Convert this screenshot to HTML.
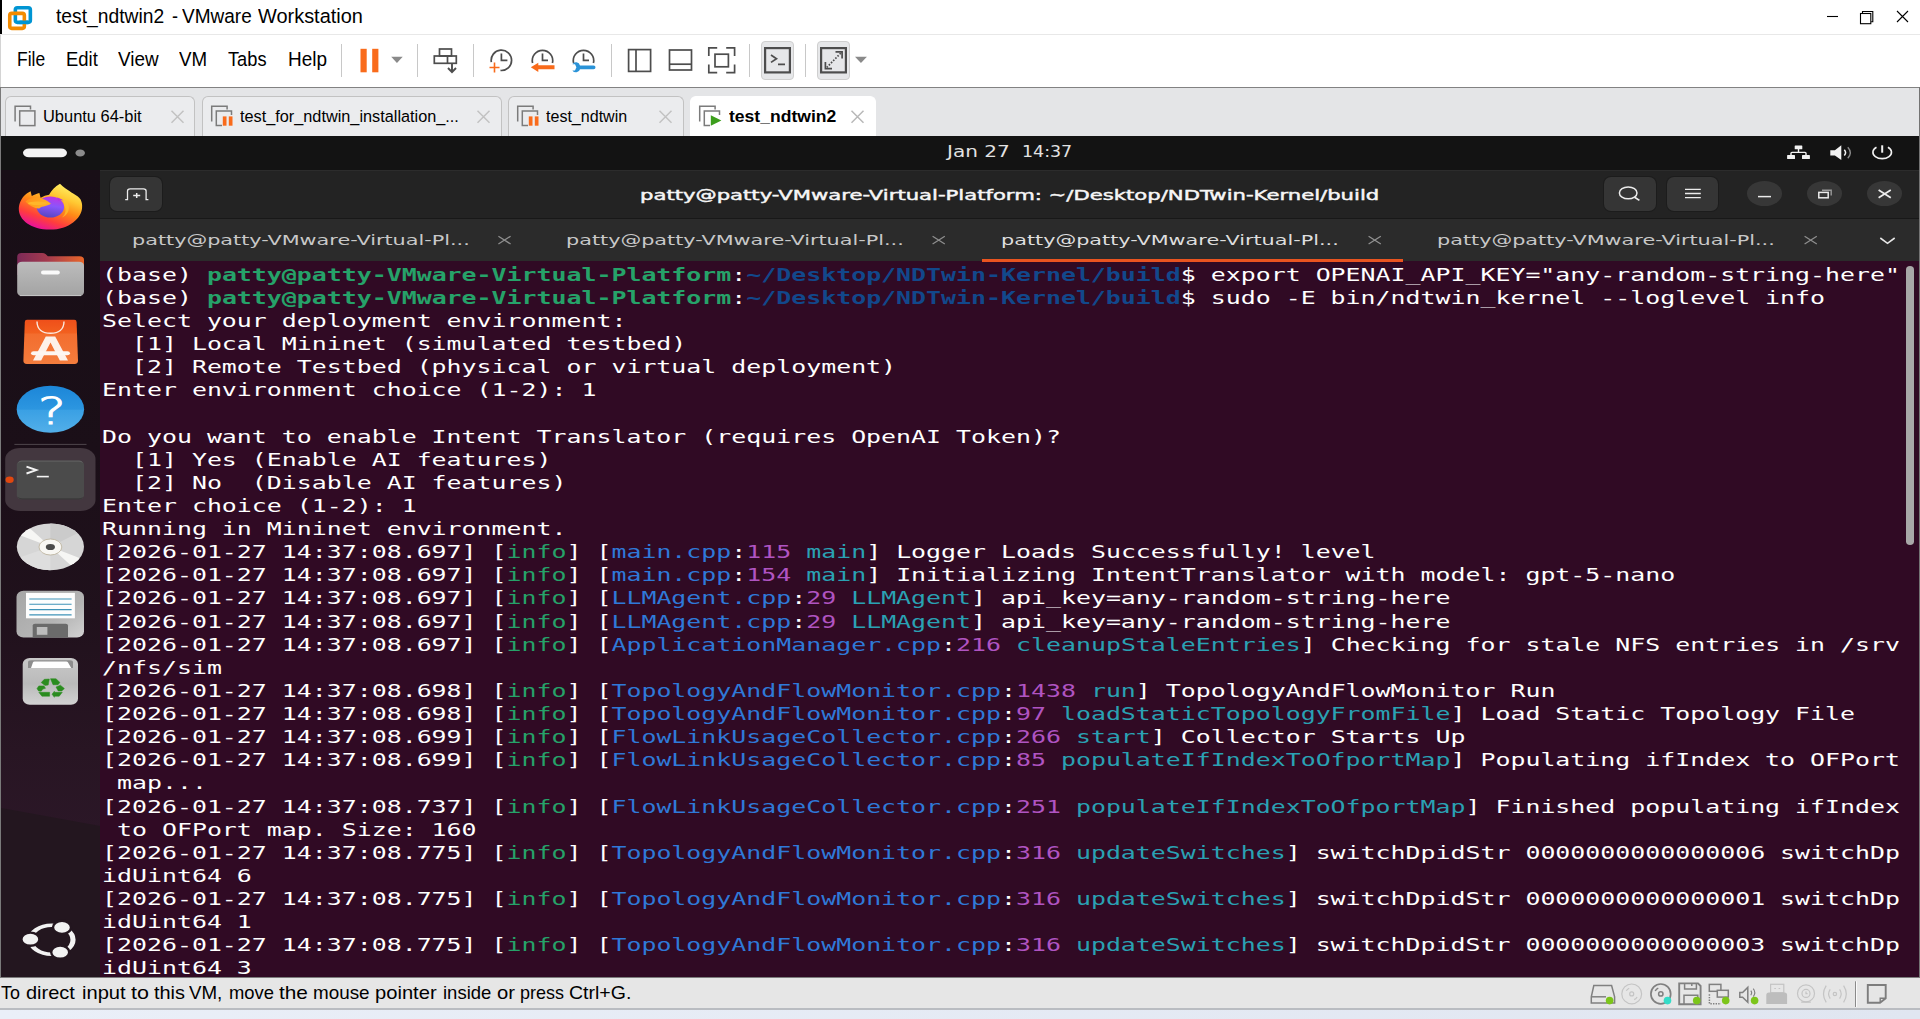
<!DOCTYPE html>
<html lang="en"><head><meta charset="utf-8"><title>test_ndtwin2 - VMware Workstation</title>
<style>
html,body{margin:0;padding:0;width:1920px;height:1019px;overflow:hidden;background:#fff;}
body{position:relative;font-family:"Liberation Sans",sans-serif;}
.t{position:absolute;white-space:pre;transform-origin:0 0;display:block;}
.abs{position:absolute;}
svg{position:absolute;overflow:visible;}
#titlebar{left:0;top:0;width:1920px;height:34px;background:#fff;}
#menubar{left:0;top:35px;width:1920px;height:52px;background:#fff;}
#tabstrip{left:0;top:87px;width:1920px;height:49px;background:#e4e5e7;border-top:1px solid #828282;box-sizing:border-box;}
.vtab{position:absolute;top:96px;height:41px;box-sizing:border-box;border:1px solid #c2c2c2;border-bottom:none;border-radius:6px 6px 0 0;background:#ebecee;}
.vtab.on{background:#fff;border-color:#fff;}
#guest{left:1px;top:136px;width:1918px;height:841px;background:#300a24;overflow:hidden;}
#topbar{left:0;top:0;width:1918px;height:34px;background:#131313;}
#dock{left:0;top:34px;width:99px;height:807px;background:linear-gradient(180deg,#180e16 0%,#1b0f18 35%,#20111c 55%,#281523 72%,#2b1727 82%,#2b1727 100%);}
#thead{left:99px;top:34px;width:1819px;height:48px;background:#232323;border-top:1px solid #2c2c2c;box-sizing:border-box;}
#ttabs{left:99px;top:82px;width:1819px;height:43px;background:#2b2b2b;border-top:1px solid #181818;box-sizing:border-box;}
#tbody{left:99px;top:125px;width:1819px;height:716px;background:#300a24;}
.row{position:absolute;left:1.6px;height:23.125px;white-space:pre;font:400 17.6px/23.125px "DejaVu Sans Mono","Liberation Mono",monospace;color:#fff;transform-origin:0 0;transform:scaleX(1.41448);}
.row b{font-weight:700}
.g{color:#26a269}.bl{color:#12488b}.i{color:#26a269}.f{color:#2f79d8}.n{color:#b054c2}.c{color:#2aa1b3}
#statusbar{left:0;top:977px;width:1920px;height:31px;background:#e6e6e6;border-top:1px solid #7c7c7c;box-sizing:border-box;}
#bottom{left:0;top:1008px;width:1920px;height:11px;background:linear-gradient(90deg,#eaeff8,#e0e6f1);border-top:2px solid #b9bcc1;box-sizing:border-box;}
.btn{position:absolute;background:#353535;border-radius:7px;box-shadow:0 0 0 1px rgba(0,0,0,.2);}
.wb{position:absolute;background:#373737;border-radius:50%;}
.sep{position:absolute;top:44px;width:1px;height:33px;background:#c8c8c8;}
.tbtn{position:absolute;top:41px;height:39px;box-sizing:border-box;background:#e6e7e9;border:1px solid #cfcfcf;border-radius:4px;}
</style></head><body>

<div class="abs" id="titlebar"></div>
<div class="abs" style="left:0;top:0;width:2px;height:34px;background:#000"></div>
<div class="abs" style="left:0;top:34px;width:1920px;height:1px;background:#e8e8e8"></div>
<div class="abs" id="menubar"></div>
<div class="abs" style="left:0;top:35px;width:1px;height:52px;background:#d4d4d4"></div>
<div class="abs" id="tabstrip"></div>
<span class="t" id="ti0" style="left:56.30px;top:7.10px;font:400 19.3px/1 'Liberation Sans',sans-serif;color:#000;transform:scaleX(0.9994);">test_ndtwin2</span>
<span class="t" id="ti1" style="left:172.20px;top:7.10px;font:400 19.3px/1 'Liberation Sans',sans-serif;color:#000;transform:scaleX(0.9343);">-</span>
<span class="t" id="ti2" style="left:182.30px;top:7.10px;font:400 19.3px/1 'Liberation Sans',sans-serif;color:#000;transform:scaleX(0.9856);">VMware</span>
<span class="t" id="ti3" style="left:257.90px;top:7.10px;font:400 19.3px/1 'Liberation Sans',sans-serif;color:#000;transform:scaleX(1.0340);">Workstation</span>
<span class="t" id="m1" style="left:16.50px;top:50.00px;font:400 19.3px/1 'Liberation Sans',sans-serif;color:#000;transform:scaleX(0.9042);">File</span>
<span class="t" id="m2" style="left:66.00px;top:50.00px;font:400 19.3px/1 'Liberation Sans',sans-serif;color:#000;transform:scaleX(0.9568);">Edit</span>
<span class="t" id="m3" style="left:118.00px;top:50.00px;font:400 19.3px/1 'Liberation Sans',sans-serif;color:#000;transform:scaleX(0.9794);">View</span>
<span class="t" id="m4" style="left:178.60px;top:50.00px;font:400 19.3px/1 'Liberation Sans',sans-serif;color:#000;transform:scaleX(0.9716);">VM</span>
<span class="t" id="m5" style="left:228.00px;top:50.00px;font:400 19.3px/1 'Liberation Sans',sans-serif;color:#000;transform:scaleX(0.9451);">Tabs</span>
<span class="t" id="m6" style="left:287.50px;top:50.00px;font:400 19.3px/1 'Liberation Sans',sans-serif;color:#000;transform:scaleX(0.9835);">Help</span>
<div class="vtab" style="left:4.6px;width:190.9px"></div>
<div class="vtab" style="left:202.4px;width:299.29999999999995px"></div>
<div class="vtab" style="left:508.3px;width:175.45px"></div>
<div class="vtab on" style="left:690px;width:185.60000000000002px"></div>
<span class="t" id="vt1" style="left:43.30px;top:108.30px;font:400 16.3px/1 'Liberation Sans',sans-serif;color:#000;transform:scaleX(1.0096);">Ubuntu 64-bit</span>
<span class="t" id="vt2" style="left:240.00px;top:108.30px;font:400 16.3px/1 'Liberation Sans',sans-serif;color:#000;transform:scaleX(0.9994);">test_for_ndtwin_installation_...</span>
<span class="t" id="vt3" style="left:545.80px;top:108.30px;font:400 16.3px/1 'Liberation Sans',sans-serif;color:#000;transform:scaleX(0.9857);">test_ndtwin</span>
<span class="t" id="vt4" style="left:728.50px;top:108.30px;font:700 16.3px/1 'Liberation Sans',sans-serif;color:#000;transform:scaleX(1.0782);">test_ndtwin2</span>
<svg width="1920" height="140" viewBox="0 0 1920 140" style="left:0;top:0" fill="none">
<!-- vmware logo -->
<g stroke-width="3.6" stroke-linejoin="round">
<rect x="15.35" y="7.75" width="15" height="14.6" rx="2" stroke="#0095d3"/>
<rect x="9.75" y="13.35" width="14.6" height="15" rx="2" stroke="#f38b00"/>
<path d="M19.5 22.35H28" stroke="#0095d3"/>
</g>
<!-- window controls -->
<g stroke="#000" stroke-width="1.1">
<path d="M1827 16.5h11"/>
<path d="M1862.5 13.2v-1.7h10.3v10.3h-1.7" />
<rect x="1860.5" y="13.5" width="10.3" height="10.2"/>
<path d="M1897 11l11 11M1908 11l-11 11"/>
</g>
<!-- toolbar -->
<g fill="#f96b1b"><rect x="360.5" y="48.8" width="6.2" height="23.5"/><rect x="372.2" y="48.8" width="6.2" height="23.5"/></g>
<path d="M391.2 56.8h11.5l-5.75 6.2z" fill="#8a8a8a"/>
<path d="M855 56.8h11.9l-5.95 6.2z" fill="#8a8a8a"/>
<!-- send cad -->
<g stroke="#4d4d4d" stroke-width="1.7" stroke-linejoin="miter">
<rect x="439.5" y="49" width="12" height="7"/>
<rect x="434.3" y="56" width="22" height="7.3"/>
<path d="M447.5 56v7.3"/>
<path d="M452 63.5v8M448 68l4 4.2 4-4.2" stroke-width="1.9"/>
</g>
<!-- snapshot take -->
<g stroke="#4d4d4d" stroke-width="1.7">
<path d="M491.35 62.1A10.2 10.2 0 1 1 500.5 70.46"/>
<path d="M501.4 53.5v6.8h6"/>
<path d="M489.5 67.5h10M494.5 62.5v10" stroke="#f96b1b" stroke-width="1.6"/>
</g>
<!-- snapshot revert -->
<g stroke="#4d4d4d" stroke-width="1.7">
<path d="M532.6 63A10.2 10.2 0 1 1 552.4 63"/>
<path d="M542.5 53.5v6.8h5.5"/>
</g>
<path d="M530.8 67.3l7.5-4.6v2.6h16.2v4h-16.2v2.6z" fill="#f96b1b"/>
<!-- snapshot manage -->
<g stroke="#4d4d4d" stroke-width="1.7">
<path d="M573.6 63A10.2 10.2 0 1 1 593.4 63"/>
<path d="M583.5 53.5v6.8h5.5"/>
</g>
<path d="M572.4 64.2a4.2 4.2 0 0 1 7.6 1.2h13.6a1.9 1.9 0 0 1 0 3.8h-13.6a4.2 4.2 0 0 1-7.6 1.2l2.6 0 1.4-3.1-1.4-3.1z" fill="#2a93d8"/>
<!-- layout icons -->
<g stroke="#4d4d4d" stroke-width="1.7">
<rect x="628.6" y="49.6" width="22" height="21.8"/><path d="M636 49.6v21.8"/>
<rect x="669.5" y="50" width="22" height="20"/><path d="M669.5 64.2h22"/>
<rect x="715" y="54.2" width="13.4" height="12.6"/>
<path d="M708.8 56v-8.2h8.4M726.2 47.8h8.4v8.2M734.6 64.5v8.2h-8.4M717.2 72.7h-8.4v-8.2"/>
</g>
</svg>
<div class="sep" style="left:341px"></div><div class="sep" style="left:417px"></div><div class="sep" style="left:473px"></div><div class="sep" style="left:611px"></div><div class="sep" style="left:749px"></div><div class="sep" style="left:805px"></div>
<div class="tbtn" style="left:760.6px;width:33.6px"></div><div class="tbtn" style="left:816.6px;width:33.8px"></div>
<svg width="1920" height="140" viewBox="0 0 1920 140" style="left:0;top:0" fill="none">
<g stroke="#4d4d4d" stroke-width="2.2">
<rect x="765.1" y="48.1" width="24.8" height="24.3"/>
<rect x="821.1" y="48.1" width="24.8" height="24.3"/>
</g>
<g stroke="#4d4d4d" stroke-width="1.7">
<path d="M771 55l5.5 3.7-5.5 3.7M778 64.3h7"/>
<path d="M835.5 51.8h6.6v6.6M832 68.7h-6.6v-6.6" />
<path d="M840.8 53.1l-14 14.3" stroke-dasharray="1.6 1.5"/>
</g>
<!-- tab icons -->
<g stroke="#7b7b7b" stroke-width="1.5">
<g id="ti"><path d="M15.1 121.5v-15.2h15.4v3.2"/><rect x="19.7" y="110.9" width="15.2" height="14.7"/></g>
</g>
<g stroke="#7b7b7b" stroke-width="1.5">
<path d="M211.7 121.5v-15.2h15.4v3.2"/><path d="M222 125.6h-5.7v-14.7h15.2v4"/>
<path d="M517.7 121.5v-15.2h15.4v3.2"/><path d="M528 125.6h-5.7v-14.7h15.2v4"/>
<path d="M699.7 121.5v-15.2h15.4v3.2"/><path d="M710 125.6h-5.7v-14.7h15.2v4"/>
</g>
<g fill="#f96b1b"><rect x="222.8" y="116.4" width="3.7" height="9.3"/><rect x="228.8" y="116.4" width="3.7" height="9.3"/>
<rect x="528.8" y="116.4" width="3.7" height="9.3"/><rect x="534.8" y="116.4" width="3.7" height="9.3"/></g>
<path d="M710.8 115.2l10.6 5.3-10.6 5.3z" fill="#3c9e1c"/>
<g stroke="#c2c2c2" stroke-width="1.5">
<path d="M171.5 110.7l12 12M183.5 110.7l-12 12"/>
<path d="M477.5 110.7l12 12M489.5 110.7l-12 12"/>
<path d="M659.5 110.7l12 12M671.5 110.7l-12 12"/>
<path d="M851.5 110.7l12 12M863.5 110.7l-12 12" stroke="#b8b8b8"/>
</g>
</svg>

<div class="abs" style="left:0;top:87px;width:1px;height:890px;background:#7a7a7a"></div>
<div class="abs" id="guest">
<div class="abs" id="topbar"></div><div class="abs" id="dock"></div><div class="abs" id="thead"></div><div class="abs" id="ttabs"></div><div class="abs" id="tbody"></div>
</div>
<span class="t" id="d1" style="left:946.70px;top:145.20px;font:400 15.1px/1 'DejaVu Sans','Liberation Sans',sans-serif;color:#e2e2e2;transform:scaleX(1.3282);">Jan 27</span>
<span class="t" id="d2" style="left:1021.70px;top:145.20px;font:400 15.1px/1 'DejaVu Sans','Liberation Sans',sans-serif;color:#e2e2e2;transform:scaleX(1.1540);">14:37</span>
<span class="t" id="tt" style="left:639.80px;top:187.50px;font:400 14.4px/1 'DejaVu Sans','Liberation Sans',sans-serif;color:#f6f6f6;transform:scaleX(1.4700);-webkit-text-stroke:0.45px #f6f6f6;">patty@patty-VMware-Virtual-Platform: ~/Desktop/NDTwin-Kernel/build</span>
<span class="t" id="tl0" style="left:132.30px;top:232.80px;font:400 14.2px/1 'DejaVu Sans','Liberation Sans',sans-serif;color:#c8c8c8;transform:scaleX(1.4625);">patty@patty-VMware-Virtual-Pl...</span>
<span class="t" id="tl1" style="left:566.00px;top:232.80px;font:400 14.2px/1 'DejaVu Sans','Liberation Sans',sans-serif;color:#c8c8c8;transform:scaleX(1.4625);">patty@patty-VMware-Virtual-Pl...</span>
<span class="t" id="tl2" style="left:1001.00px;top:232.80px;font:400 14.2px/1 'DejaVu Sans','Liberation Sans',sans-serif;color:#dedede;transform:scaleX(1.4625);">patty@patty-VMware-Virtual-Pl...</span>
<span class="t" id="tl3" style="left:1436.70px;top:232.80px;font:400 14.2px/1 'DejaVu Sans','Liberation Sans',sans-serif;color:#c8c8c8;transform:scaleX(1.4625);">patty@patty-VMware-Virtual-Pl...</span>
<div class="abs" style="left:982.3px;top:259px;width:421px;height:3px;background:#e95420"></div>
<div class="btn" style="left:110px;top:177px;width:51.6px;height:34px"></div>
<div class="btn" style="left:1604px;top:177px;width:51.6px;height:34px"></div>
<div class="btn" style="left:1666.8px;top:177px;width:51.6px;height:34px"></div>
<div class="wb" style="left:1747px;top:181.4px;width:35px;height:24.6px"></div>
<div class="wb" style="left:1807px;top:181.4px;width:35px;height:24.6px"></div>
<div class="wb" style="left:1867px;top:181.4px;width:35px;height:24.6px"></div>
<div class="abs" style="left:1905.6px;top:265.5px;width:8.9px;height:279.4px;background:#a8a8a8;border-radius:4.3px/4px"></div>
<svg width="1920" height="1019" viewBox="0 0 1920 1019" style="left:0;top:0" fill="none">
<defs>
<linearGradient id="ffb" x1="0.85" y1="0.05" x2="0.35" y2="1"><stop offset="0" stop-color="#fff36b"/><stop offset="0.28" stop-color="#ffc933"/><stop offset="0.52" stop-color="#ff8a16"/><stop offset="0.78" stop-color="#ff3d3d"/><stop offset="1" stop-color="#e8129a"/></linearGradient>
<linearGradient id="ffg" x1="0.6" y1="0" x2="0.4" y2="1"><stop offset="0" stop-color="#c135e2"/><stop offset="0.45" stop-color="#8a55fb"/><stop offset="1" stop-color="#5646c0"/></linearGradient>
<linearGradient id="fff" x1="0" y1="0" x2="1" y2="0.3"><stop offset="0" stop-color="#ff8f1a"/><stop offset="1" stop-color="#ffb224"/></linearGradient>
<linearGradient id="fob" x1="0" y1="0" x2="1" y2="0"><stop offset="0" stop-color="#7c2a57"/><stop offset="0.45" stop-color="#a43a4e"/><stop offset="1" stop-color="#e9662a"/></linearGradient>
<linearGradient id="fof" x1="0" y1="0" x2="0" y2="1"><stop offset="0" stop-color="#bcbcbc"/><stop offset="1" stop-color="#a3a3a3"/></linearGradient>
<linearGradient id="apc" x1="0" y1="0" x2="0" y2="1"><stop offset="0" stop-color="#ef4f1a"/><stop offset="0.3" stop-color="#f2601f"/><stop offset="0.32" stop-color="#f36d2e"/><stop offset="1" stop-color="#f47d3d"/></linearGradient>
<linearGradient id="hlp" x1="0" y1="0" x2="0" y2="1"><stop offset="0" stop-color="#1c86d8"/><stop offset="0.5" stop-color="#2c96e0"/><stop offset="0.52" stop-color="#3aa0e4"/><stop offset="1" stop-color="#52afe9"/></linearGradient>
<linearGradient id="flp" x1="0" y1="0" x2="1" y2="1"><stop offset="0" stop-color="#a6a6a6"/><stop offset="0.6" stop-color="#b4b4b4"/><stop offset="1" stop-color="#d2d2d2"/></linearGradient>
<linearGradient id="trs" x1="0" y1="0" x2="0" y2="1"><stop offset="0" stop-color="#c9c9c9"/><stop offset="0.55" stop-color="#bababa"/><stop offset="1" stop-color="#d2d2d2"/></linearGradient>
<clipPath id="cdc"><ellipse cx="50.4" cy="546.8" rx="33.6" ry="23.4"/></clipPath>
</defs>
<!-- topbar left pill -->
<rect x="23" y="148.4" width="44" height="8.8" rx="6" ry="4.4" fill="#f4f4f4"/>
<ellipse cx="80.2" cy="153" rx="4.8" ry="3.5" fill="#8c8c8c"/>
<!-- system icons -->
<g fill="#f2f2f2">
<rect x="1794.7" y="145.4" width="7.6" height="3.9" rx="0.6"/>
<rect x="1787.1" y="155.1" width="7.9" height="3.9" rx="0.6"/>
<rect x="1802" y="155.1" width="7.9" height="3.9" rx="0.6"/>
</g>
<path d="M1798.5 149v3.4M1791 155.4v-2.2q0-.8 1-.8h13q1 0 1 .8v2.2" stroke="#f2f2f2" stroke-width="1.4"/>
<path d="M1830.3 150.2h4.6l6.4-4.9v14.8l-6.4-4.6h-4.6z" fill="#f2f2f2"/>
<path d="M1844.3 149.8q2.6 2.9 0 5.8" stroke="#f2f2f2" stroke-width="1.5"/>
<path d="M1847.8 147.2q5 5.5 0 11" stroke="#8a8a8a" stroke-width="1.4"/>
<path d="M1876.5 147.3a9.3 6.3 0 1 0 11.4 0" stroke="#f2f2f2" stroke-width="1.6"/>
<path d="M1882.2 145.3v7.4" stroke="#f2f2f2" stroke-width="2"/>
<!-- header button icons -->
<g stroke="#ececec" stroke-width="1.3">
<path d="M125.2 199.6h2.3v-8.5q0-2.2 2.6-2.2h13.4q2.6 0 2.6 2.2v8.5h2.3"/>
<path d="M133.2 195.5h7M136.7 193v5" stroke-width="1.5"/>
<ellipse cx="1628.2" cy="192.9" rx="8.8" ry="5.9" stroke-width="1.5"/>
<path d="M1634.6 197.2l4.8 3.2" stroke-width="1.7"/>
<path d="M1685 189.3h15.8M1685 193.5h15.8M1685 197.7h15.8" stroke-width="1.3"/>
<path d="M1758 196.6h13" stroke-width="1.5"/>
<rect x="1818.8" y="192.4" width="9.4" height="5.4" stroke-width="1.5"/>
<path d="M1822 190.2h9.2v5.2" stroke="#9a9a9a" stroke-width="1.4"/>
<path d="M1878.6 190l12.2 7.8M1890.8 190l-12.2 7.8" stroke-width="1.7"/>
</g>
<!-- term tab closes + chevron -->
<g stroke="#8e8e8e" stroke-width="1.3">
<path d="M498.4 236.2l12.2 7.8M510.6 236.2l-12.2 7.8"/>
<path d="M932.6 236.2l12.2 7.8M944.8 236.2l-12.2 7.8"/>
<path d="M1368.6 236.2l12.2 7.8M1380.8 236.2l-12.2 7.8" stroke="#929292"/>
<path d="M1804.6 236.2l12.2 7.8M1816.8 236.2l-12.2 7.8"/>
</g>
<path d="M1880.3 238l7.2 5.3 7.2-5.3" stroke="#e6e6e6" stroke-width="1.6"/>

<!-- ===== dock ===== -->
<path d="M1 808L100 826V977H1Z" fill="#23161f"/>
<!-- firefox -->
<path d="M30.6 191.3C31 193 31.4 194.6 31.8 196C34.5 194.6 37 193.8 39.4 193.1C39.8 194.8 40.2 196.4 40.6 197.8C43.5 196.2 46.3 195.2 49.1 194.8C51.2 190.6 55 186 60 183.65C62.5 186.5 68 190 73.6 193.7C77 195.6 79.2 197.4 80.6 199.5C81.8 202 82.3 204.6 82.1 207.2C82 218 69 229.6 50 229.6C31 229.6 18.8 220 18.8 209C18.8 203.5 21.5 198.2 25 195C27 193.4 29 192.2 30.6 191.3Z" fill="url(#ffb)"/>
<ellipse cx="50.4" cy="207" rx="13.7" ry="10.6" fill="url(#ffg)"/>
<path d="M57 197.5C59.5 198 61.5 199 63.6 200.5C61.5 200.2 59.8 200.4 58.4 201Z" fill="#b537e0"/>
<path d="M25.5 201.5C29 197.8 36 196.6 41.5 198.2C45.5 199.5 48.8 201.8 50.9 203.8C48 206.2 42.5 205.8 39.2 208.4C35 208.6 29.5 206 25.5 201.5Z" fill="url(#fff)"/>
<ellipse cx="37.5" cy="203.3" rx="9.5" ry="1.7" fill="#ffb62a"/>
<path d="M63.9 205C66.5 209 66 214 62 217.5C67.5 215.5 70.5 209.5 68 203.5C67 201.5 65.5 200.3 63.3 200.4C64.2 201.8 64.3 203.3 63.9 205Z" fill="#ffc02e" opacity="0.75"/>
<!-- files -->
<path d="M17.2 275V257Q17.2 253 21.5 253H42Q44.3 253 45.8 254.3L47.8 256.3H79.5Q84 256.3 84 260V275Z" fill="url(#fob)"/>
<rect x="17.2" y="261.7" width="66.8" height="34.4" rx="5" ry="4" fill="url(#fof)"/>
<path d="M20 295.6H81" stroke="#c9c9c9" stroke-width="0.9"/>
<rect x="41" y="270.5" width="18.8" height="3.9" rx="2" fill="#fafafa"/>
<!-- app center -->
<path d="M27 319.8H74.3Q76.5 319.8 76.6 322L78 360.6Q78.1 364 74.6 364H26.8Q23.3 364 23.4 360.6L24.8 322Q24.9 319.8 27 319.8Z" fill="url(#apc)"/>
<path d="M37 321.5C37 329.5 42.5 333.3 50.5 333.3S64 329.5 64 321.5" stroke="#fbe9df" stroke-width="1.4"/>
<path d="M33 360.6L45.8 336.6H55.2L68 360.6H59.8L50.5 342.4L41.2 360.6Z" fill="#fdf1e9"/>
<rect x="31" y="351.3" width="39" height="3.9" rx="2.6" ry="1.95" fill="#fdf6f1"/>
<!-- help -->
<ellipse cx="50.4" cy="409.2" rx="33.7" ry="23.5" fill="url(#hlp)"/>
<text x="0" y="0" transform="translate(52 423.8) scale(1.42 1)" text-anchor="middle" font-family="'DejaVu Sans','Liberation Sans',sans-serif" font-weight="200" font-size="37.5" fill="#fff" stroke="#fff" stroke-width="0.9">?</text>
<!-- separator -->
<path d="M14.4 444.4H86.5" stroke="#4f464c" stroke-width="1"/>
<!-- terminal (active) -->
<rect x="5.2" y="448" width="90.3" height="63" rx="15" ry="11" fill="#43373f"/>
<rect x="16.8" y="460.6" width="67.2" height="38.7" rx="5.5" ry="4" fill="#4b4b4b"/>
<path d="M18.5 462.4Q19.5 461.1 22 461.1H79Q81.5 461.1 82.4 462.4" stroke="#666" stroke-width="0.9"/>
<path d="M18.5 497.6Q19.5 498.9 22 498.9H79Q81.5 498.9 82.4 497.6" stroke="#333" stroke-width="0.9"/>
<path d="M26.5 466.7L36.3 470.1L26.5 473.5" stroke="#f4f4f4" stroke-width="1.9"/>
<path d="M36.8 476.6H48.8" stroke="#f4f4f4" stroke-width="1.6"/>
<ellipse cx="9.6" cy="479.7" rx="4.1" ry="3.2" fill="#e2470f"/>
<!-- cd -->
<ellipse cx="50.4" cy="546.8" rx="33.6" ry="23.4" fill="#d6d6d6"/>
<g clip-path="url(#cdc)">
<path d="M50.4 546.8L14 533L24 523Z" fill="#f6f6f4"/>
<path d="M50.4 546.8L87 561L77 571Z" fill="#f6f6f4"/>
<path d="M50.4 546.8L50.4 520L88 528Z" fill="#cbcbcb"/>
<path d="M50.4 546.8L12 560L50.4 575Z" fill="#dedede"/>
</g>
<ellipse cx="50.4" cy="547" rx="11.4" ry="8" fill="#f8f7f3" stroke="#b8ad97" stroke-width="0.8"/>
<ellipse cx="50.4" cy="547" rx="4.6" ry="3.1" fill="#4a4a4a"/>
<!-- floppy/text editor -->
<rect x="16.5" y="590.8" width="67.5" height="46.7" rx="7" ry="6" fill="url(#flp)"/>
<rect x="26" y="592.9" width="48.9" height="25.4" fill="#fdfdfd"/>
<path d="M29.3 599H71.6M29.3 604.3H71.6M29.3 609.6H71.6M29.3 614.9H71.6" stroke="#3f93b8" stroke-width="1.1"/>
<path d="M32.7 637.5V625.6Q32.7 623.8 35 623.8H65.7Q68 623.8 68 625.6V637.5Z" fill="#6b6b6b"/>
<rect x="36.8" y="627" width="10.6" height="7.8" fill="#bdbdbd"/>
<!-- trash -->
<rect x="22.7" y="658" width="55.3" height="46.8" rx="7" ry="6" fill="url(#trs)"/>
<path d="M28 668V662.5Q28 660.3 31 660.3H70Q73 660.3 73 662.5V668Z" fill="#8d8d8d"/>
<path d="M31 668L33 662.2Q33.3 661.4 34.5 661.4H66.3Q67.5 661.4 67.9 662.2L71.2 668Z" fill="#fff"/>
<g fill="#2a8c1f" stroke="#2a8c1f" stroke-width="0.5" stroke-linejoin="round"><polygon points="41.2,682.6 44.3,679.3 49.3,679.0 48.2,685.0 45.0,685.4"/><polygon points="50.5,678.7 56.0,678.8 59.9,682.4 58.0,684.7 53.0,684.7"/><polygon points="56.0,687.0 60.4,685.2 64.4,688.6 61.8,690.9 58.2,690.9"/><polygon points="52.0,694.2 54.4,691.2 54.4,692.3 62.3,692.3 59.2,696.2 54.4,696.2 54.4,697.3"/><polygon points="38.8,692.3 49.6,692.3 49.6,696.2 41.9,696.2"/><polygon points="37.0,688.6 38.8,685.9 44.0,685.9 45.5,688.3 42.9,689.1 41.2,691.2 38.5,690.9"/></g>
<!-- ubuntu -->
<circle r="14.5" transform="translate(51.7 939.8) scale(1.47 1)" stroke="#f2f2f2" stroke-width="3.5"/>
<g fill="#f2f2f2" stroke="#23161f" stroke-width="2.4">
<ellipse cx="30.4" cy="939.2" rx="9" ry="6.6"/>
<ellipse cx="62" cy="927.4" rx="9" ry="6.6"/>
<ellipse cx="60.2" cy="952.2" rx="9" ry="6.6"/>
</g>
</svg>

<div class="abs" id="term" style="left:100px;top:261px;width:1806px;height:716px;overflow:hidden">
<div class="row" style="top:2.70px">(base) <b class="g">patty@patty-VMware-Virtual-Platform</b>:<b class="bl">~/Desktop/NDTwin-Kernel/build</b>$ export OPENAI_API_KEY=&quot;any-random-string-here&quot;</div>
<div class="row" style="top:25.82px">(base) <b class="g">patty@patty-VMware-Virtual-Platform</b>:<b class="bl">~/Desktop/NDTwin-Kernel/build</b>$ sudo -E bin/ndtwin_kernel --loglevel info</div>
<div class="row" style="top:48.95px">Select your deployment environment:</div>
<div class="row" style="top:72.07px">  [1] Local Mininet (simulated testbed)</div>
<div class="row" style="top:95.20px">  [2] Remote Testbed (physical or virtual deployment)</div>
<div class="row" style="top:118.32px">Enter environment choice (1-2): 1</div>
<div class="row" style="top:141.45px"></div>
<div class="row" style="top:164.57px">Do you want to enable Intent Translator (requires OpenAI Token)?</div>
<div class="row" style="top:187.70px">  [1] Yes (Enable AI features)</div>
<div class="row" style="top:210.82px">  [2] No  (Disable AI features)</div>
<div class="row" style="top:233.95px">Enter choice (1-2): 1</div>
<div class="row" style="top:257.07px">Running in Mininet environment.</div>
<div class="row" style="top:280.20px">[2026-01-27 14:37:08.697] [<span class="i">info</span>] [<span class="f">main.cpp</span>:<span class="n">115</span> <span class="c">main</span>] Logger Loads Successfully! level</div>
<div class="row" style="top:303.32px">[2026-01-27 14:37:08.697] [<span class="i">info</span>] [<span class="f">main.cpp</span>:<span class="n">154</span> <span class="c">main</span>] Initializing IntentTranslator with model: gpt-5-nano</div>
<div class="row" style="top:326.45px">[2026-01-27 14:37:08.697] [<span class="i">info</span>] [<span class="f">LLMAgent.cpp</span>:<span class="n">29</span> <span class="c">LLMAgent</span>] api_key=any-random-string-here</div>
<div class="row" style="top:349.57px">[2026-01-27 14:37:08.697] [<span class="i">info</span>] [<span class="f">LLMAgent.cpp</span>:<span class="n">29</span> <span class="c">LLMAgent</span>] api_key=any-random-string-here</div>
<div class="row" style="top:372.70px">[2026-01-27 14:37:08.697] [<span class="i">info</span>] [<span class="f">ApplicationManager.cpp</span>:<span class="n">216</span> <span class="c">cleanupStaleEntries</span>] Checking for stale NFS entries in /srv</div>
<div class="row" style="top:395.82px">/nfs/sim</div>
<div class="row" style="top:418.95px">[2026-01-27 14:37:08.698] [<span class="i">info</span>] [<span class="f">TopologyAndFlowMonitor.cpp</span>:<span class="n">1438</span> <span class="c">run</span>] TopologyAndFlowMonitor Run</div>
<div class="row" style="top:442.07px">[2026-01-27 14:37:08.698] [<span class="i">info</span>] [<span class="f">TopologyAndFlowMonitor.cpp</span>:<span class="n">97</span> <span class="c">loadStaticTopologyFromFile</span>] Load Static Topology File</div>
<div class="row" style="top:465.20px">[2026-01-27 14:37:08.699] [<span class="i">info</span>] [<span class="f">FlowLinkUsageCollector.cpp</span>:<span class="n">266</span> <span class="c">start</span>] Collector Starts Up</div>
<div class="row" style="top:488.32px">[2026-01-27 14:37:08.699] [<span class="i">info</span>] [<span class="f">FlowLinkUsageCollector.cpp</span>:<span class="n">85</span> <span class="c">populateIfIndexToOfportMap</span>] Populating ifIndex to OFPort</div>
<div class="row" style="top:511.45px"> map...</div>
<div class="row" style="top:534.57px">[2026-01-27 14:37:08.737] [<span class="i">info</span>] [<span class="f">FlowLinkUsageCollector.cpp</span>:<span class="n">251</span> <span class="c">populateIfIndexToOfportMap</span>] Finished populating ifIndex</div>
<div class="row" style="top:557.70px"> to OFPort map. Size: 160</div>
<div class="row" style="top:580.82px">[2026-01-27 14:37:08.775] [<span class="i">info</span>] [<span class="f">TopologyAndFlowMonitor.cpp</span>:<span class="n">316</span> <span class="c">updateSwitches</span>] switchDpidStr 0000000000000006 switchDp</div>
<div class="row" style="top:603.95px">idUint64 6</div>
<div class="row" style="top:627.07px">[2026-01-27 14:37:08.775] [<span class="i">info</span>] [<span class="f">TopologyAndFlowMonitor.cpp</span>:<span class="n">316</span> <span class="c">updateSwitches</span>] switchDpidStr 0000000000000001 switchDp</div>
<div class="row" style="top:650.20px">idUint64 1</div>
<div class="row" style="top:673.32px">[2026-01-27 14:37:08.775] [<span class="i">info</span>] [<span class="f">TopologyAndFlowMonitor.cpp</span>:<span class="n">316</span> <span class="c">updateSwitches</span>] switchDpidStr 0000000000000003 switchDp</div>
<div class="row" style="top:696.45px">idUint64 3</div>
</div>
<div class="abs" id="statusbar"></div><div class="abs" id="bottom"></div>
<div class="abs" style="left:1919px;top:87px;width:1px;height:890px;background:#737373"></div>
<span class="t" id="st0" style="left:0.90px;top:983.70px;font:400 18.6px/1 'Liberation Sans',sans-serif;color:#000;transform:scaleX(0.9623);">To</span>
<span class="t" id="st1" style="left:25.90px;top:983.70px;font:400 18.6px/1 'Liberation Sans',sans-serif;color:#000;transform:scaleX(1.0755);">direct</span>
<span class="t" id="st2" style="left:81.50px;top:983.70px;font:400 18.6px/1 'Liberation Sans',sans-serif;color:#000;transform:scaleX(1.0811);">input</span>
<span class="t" id="st3" style="left:131.20px;top:983.70px;font:400 18.6px/1 'Liberation Sans',sans-serif;color:#000;transform:scaleX(1.1537);">to</span>
<span class="t" id="st4" style="left:153.50px;top:983.70px;font:400 18.6px/1 'Liberation Sans',sans-serif;color:#000;transform:scaleX(1.0713);">this</span>
<span class="t" id="st5" style="left:189.20px;top:983.70px;font:400 18.6px/1 'Liberation Sans',sans-serif;color:#000;transform:scaleX(1.0072);">VM,</span>
<span class="t" id="st6" style="left:228.50px;top:983.70px;font:400 18.6px/1 'Liberation Sans',sans-serif;color:#000;transform:scaleX(0.9897);">move</span>
<span class="t" id="st7" style="left:279.20px;top:983.70px;font:400 18.6px/1 'Liberation Sans',sans-serif;color:#000;transform:scaleX(1.1176);">the</span>
<span class="t" id="st8" style="left:313.20px;top:983.70px;font:400 18.6px/1 'Liberation Sans',sans-serif;color:#000;transform:scaleX(1.0141);">mouse</span>
<span class="t" id="st9" style="left:375.20px;top:983.70px;font:400 18.6px/1 'Liberation Sans',sans-serif;color:#000;transform:scaleX(1.0834);">pointer</span>
<span class="t" id="st10" style="left:442.50px;top:983.70px;font:400 18.6px/1 'Liberation Sans',sans-serif;color:#000;transform:scaleX(0.9940);">inside</span>
<span class="t" id="st11" style="left:496.50px;top:983.70px;font:400 18.6px/1 'Liberation Sans',sans-serif;color:#000;transform:scaleX(1.0878);">or</span>
<span class="t" id="st12" style="left:520.20px;top:983.70px;font:400 18.6px/1 'Liberation Sans',sans-serif;color:#000;transform:scaleX(0.9655);">press</span>
<span class="t" id="st13" style="left:568.50px;top:983.70px;font:400 18.6px/1 'Liberation Sans',sans-serif;color:#000;transform:scaleX(1.0487);">Ctrl+G.</span>
<svg width="340" height="40" viewBox="1580 976 340 40" style="left:1580px;top:976px" fill="none">
<g stroke="#808080" stroke-width="1.5">
<path d="M1593.8 985.6H1611.6L1614.6 996.8V1003H1591.3V996.8Z"/><path d="M1591.3 996.8H1606"/>
<circle cx="1660.8" cy="993.9" r="9.9" stroke-width="1.7"/><circle cx="1660.8" cy="993.9" r="2.2"/><path d="M1655.2 991A6.3 6.3 0 0 1 1658.3 988.1"/>
<path d="M1679.2 983.4H1698L1700.6 986V1004.3H1679.2Z" stroke-width="1.9"/><path d="M1684.6 983.4V989H1696.4V983.4M1691.8 983.4V986"/><path d="M1684 1004.3V995.2H1697.8V1004.3"/>
<rect x="1709.3" y="984.4" width="11.6" height="6.9"/><rect x="1717.3" y="990.3" width="11" height="6.8" fill="#e6e6e6"/>
<path d="M1709.4 994.3V1003.7H1721" stroke-dasharray="1.4 1.2"/>
<path d="M1739.8 992.6H1742.6L1747.8 987.4V1002.2L1742.6 997.2H1739.8Z"/>
<path d="M1750.8 990.6q1.8 2 0 4.6M1753.2 988.6q3.2 4 0 8" stroke-width="1.1"/>
</g>
<g stroke="#c4c4c4" stroke-width="1.2">
<circle cx="1631.7" cy="993.9" r="9.9"/><circle cx="1631.7" cy="993.9" r="2"/><path d="M1626.3 990.8A6.3 6.3 0 0 1 1629.2 988.2M1637.1 997A6.3 6.3 0 0 1 1634.2 999.6"/>
<rect x="1770.6" y="984.3" width="13.2" height="8.4"/><path d="M1774.3 988.5h1.6M1778.6 988.5h1.6"/>
<circle cx="1806" cy="993.4" r="8.5"/><circle cx="1806" cy="993.4" r="4"/><path d="M1806 991.6v2h1.6M1801.2 1002.2h9.6"/>
<circle cx="1834.9" cy="994" r="1.7"/>
<path d="M1830.2 989.4q-3.2 4.6 0 9.2M1839.6 989.4q3.2 4.6 0 9.2M1826.2 985.6q-5.4 8.4 0 16.8M1843.6 985.6q5.4 8.4 0 16.8"/>
</g>
<path d="M1766.3 1003.9V995Q1766.3 992.5 1769 992.5H1784.4Q1787.1 992.5 1787.1 995V1003.9Z" fill="#bdbdbd"/>
<g fill="#7cc51a"><circle cx="1609.6" cy="1000.6" r="3.8"/><circle cx="1696.7" cy="1000.6" r="3.8"/><circle cx="1725.7" cy="1000.6" r="3.8"/><circle cx="1754.6" cy="1000.6" r="3.8"/></g>
<circle cx="1667.5" cy="1000.6" r="3.8" fill="#34dcc8"/>
<path d="M1855.5 981.3V1007" stroke="#8a8a8a" stroke-width="1"/><path d="M1856.5 981.3V1007" stroke="#fafafa" stroke-width="1"/>
<path d="M1867.8 985H1885.7V998.2L1880 1002.7H1867.8Z" stroke="#7d7d7d" stroke-width="1.9"/><path d="M1880.2 1002.5V998.3H1885.5" stroke="#7d7d7d" stroke-width="1.4"/>
</svg>

</body></html>
